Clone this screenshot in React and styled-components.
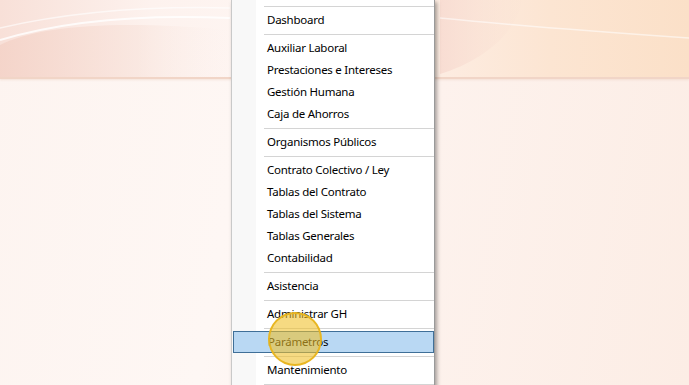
import React from "react";
import styled, { createGlobalStyle } from "styled-components";

const GlobalStyle = createGlobalStyle`
  html, body { margin: 0; padding: 0; height: 100%; overflow: hidden; }
  body { font-family: "Noto Sans", "Liberation Sans", sans-serif; }
  #root { height: 100%; }
`;

const Desktop = styled.div`
  position: relative;
  width: 100%;
  height: 100vh;
  overflow: hidden;
  display: flex;
  flex-direction: column;
  background: linear-gradient(100deg, #fdf4f0 0%, #fef7f4 35%, #fdf2ed 60%, #fcede5 100%);
`;

const Banner = styled.div`
  position: relative;
  height: 77px;
  flex: none;
  background: linear-gradient(90deg, #f8e0d8 0%, #fdf2ee 22%, #fef6f3 42%, #fdede3 62%, #fce5d2 80%, #fbe0c8 100%);
  border-bottom: 2px solid #f1d5c7;
  box-shadow: 0 1px 2px rgba(230, 190, 170, 0.35);
  svg { display: block; width: 100%; height: 100%; }
`;

const Workspace = styled.div`
  flex: 1;
`;

const ContextMenu = styled.div`
  position: absolute;
  left: 231px;
  top: 0;
  bottom: -30px;
  width: 202px;
  padding-top: 3px;
  background: linear-gradient(90deg, #f8f8f8 0, #f8f8f8 24px, #ffffff 24px);
  border-left: 1px solid #c9c9c9;
  border-right: 1px solid #9a9a9a;
  box-shadow: 2px 2px 4px rgba(0, 0, 0, 0.35);
  display: flex;
  flex-direction: column;
`;

const MenuItem = styled.div`
  height: 22px;
  box-sizing: border-box;
  display: flex;
  align-items: center;
  padding-left: ${(p) => (p.$active ? "34px" : "35px")};
  margin-left: ${(p) => (p.$active ? "1px" : "0")};
  font-size: 11.5px;
  letter-spacing: -0.25px;
  color: #000;
  white-space: nowrap;
  background: ${(p) => (p.$active ? "#b9d8f3" : "transparent")};
  border: ${(p) => (p.$active ? "1px solid #3f6f98" : "none")};
  line-height: 1;
  padding-bottom: 1px;
`;

const Separator = styled.div`
  height: 1px;
  margin: 3px 0 2px 32px;
  background: #d4d4d4;
`;

const ClickMarker = styled.div`
  position: absolute;
  left: 268px;
  top: 312px;
  width: 50px;
  height: 50px;
  border-radius: 50%;
  background: rgba(240, 192, 40, 0.58);
  border: 2px solid rgba(232, 180, 30, 0.95);
  pointer-events: none;
`;

const groups = [
  ["Dashboard"],
  ["Auxiliar Laboral", "Prestaciones e Intereses", "Gestión Humana", "Caja de Ahorros"],
  ["Organismos Públicos"],
  ["Contrato Colectivo / Ley", "Tablas del Contrato", "Tablas del Sistema", "Tablas Generales", "Contabilidad"],
  ["Asistencia"],
  ["Administrar GH"],
  ["Parámetros"],
  ["Mantenimiento"],
];

export default function App() {
  return (
    <>
      <GlobalStyle />
      <Desktop>
        <Banner>
          <svg viewBox="0 0 689 77" preserveAspectRatio="none">
            <defs>
              <linearGradient id="waveL" x1="0" y1="0" x2="1" y2="0">
                <stop offset="0" stopColor="#f4d3c8" stopOpacity="0.9" />
                <stop offset="0.6" stopColor="#f7dfd6" stopOpacity="0.5" />
                <stop offset="1" stopColor="#fbefea" stopOpacity="0" />
              </linearGradient>
              <linearGradient id="waveR" x1="0" y1="0" x2="1" y2="0">
                <stop offset="0" stopColor="#f7d9cf" stopOpacity="0.8" />
                <stop offset="1" stopColor="#fae3d5" stopOpacity="0.2" />
              </linearGradient>
            </defs>
            <path d="M0 77 L0 45 C 40 25, 120 20, 230 30 L 230 77 Z" fill="url(#waveL)" />
            <path d="M0 40 C 60 22, 140 14, 230 18" stroke="#ffffff" strokeWidth="2" fill="none" opacity="0.8" />
            <path d="M0 28 C 70 12, 150 6, 230 8" stroke="#ffffff" strokeWidth="1.5" fill="none" opacity="0.6" />
            <path d="M440 0 L 522 0 C 516 35, 480 62, 440 74 Z" fill="url(#waveR)" />
            <path d="M440 18 C 520 26, 600 32, 689 38" stroke="#ffffff" strokeWidth="1.5" fill="none" opacity="0.55" />
          </svg>
        </Banner>
        <Workspace />
        <ContextMenu>
          {groups.map((g, gi) => (
            <React.Fragment key={gi}>
              <Separator />
              {g.map((label) => (
                <MenuItem key={label} $active={label === "Parámetros"}>
                  {label}
                </MenuItem>
              ))}
            </React.Fragment>
          ))}
          <Separator />
        </ContextMenu>
        <ClickMarker />
      </Desktop>
    </>
  );
}
